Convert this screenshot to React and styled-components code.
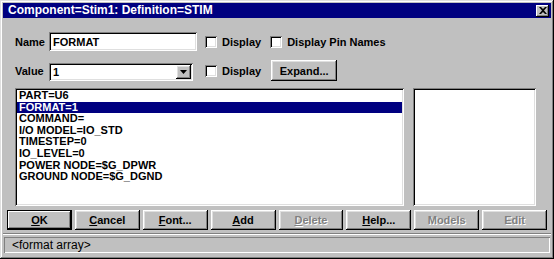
import React from "react"
import styled, { createGlobalStyle } from "styled-components"

const GlobalStyle = createGlobalStyle`
  html, body {
    margin: 0;
    padding: 0;
    background: #c0c0c0;
  }
  * {
    box-sizing: border-box;
  }
`

const raised = `
  box-shadow: inset -1px -1px #000, inset 1px 1px #fff, inset -2px -2px #808080, inset 2px 2px #dfdfdf;
`

const sunken = `
  box-shadow: inset 1px 1px #808080, inset -1px -1px #fff, inset 2px 2px #000, inset -2px -2px #dfdfdf;
`

const Window = styled.div`
  width: 554px;
  height: 259px;
  background: #c0c0c0;
  padding: 3px;
  display: flex;
  flex-direction: column;
  font-family: "Liberation Sans", Arial, sans-serif;
  font-size: 11px;
  font-weight: bold;
  color: #000;
  box-shadow: inset -1px -1px #000, inset 1px 1px #dfdfdf, inset -2px -2px #808080, inset 2px 2px #fff;
`

const TitleBar = styled.div`
  height: 15px;
  background: #000080;
  color: #fff;
  display: flex;
  align-items: center;
  justify-content: space-between;
  padding: 0 2px 0 5px;
  font-size: 12px;
  line-height: 15px;
`

const CloseButton = styled.div`
  width: 13px;
  height: 12px;
  background: #c0c0c0;
  display: flex;
  align-items: center;
  justify-content: center;
  box-shadow: inset -1px -1px #000, inset 1px 1px #fff, inset -2px -2px #808080;
`

const Body = styled.div`
  flex: 1;
  display: flex;
  flex-direction: column;
  padding: 14px 12px 0 12px;
`

const Row = styled.div`
  display: flex;
  align-items: center;
  height: ${({ $h }) => $h}px;
  margin-top: ${({ $mt }) => $mt || 0}px;
`

const Label = styled.div`
  width: 34px;
  flex-shrink: 0;
`

const TextBox = styled.div`
  width: ${({ $w }) => $w}px;
  height: ${({ $h }) => $h}px;
  align-self: ${({ $self }) => $self || "center"};
  background: #fff;
  ${sunken}
  padding: 0 4px;
  display: flex;
  align-items: center;
  position: relative;
`

const DropButton = styled.div`
  position: absolute;
  right: 2px;
  top: 2px;
  bottom: 2px;
  width: 15px;
  background: #c0c0c0;
  ${raised}
  display: flex;
  align-items: center;
  justify-content: center;
`

const Check = styled.div`
  width: 12px;
  height: 12px;
  background: #fff;
  margin-left: ${({ $ml }) => $ml}px;
  margin-right: 5px;
  flex-shrink: 0;
  box-shadow: inset 1px 1px #808080, inset -1px -1px #fff, inset 2px 2px #000, inset -2px -2px #dfdfdf;
`

const Button = styled.div`
  height: ${({ $h }) => $h || 20}px;
  width: ${({ $w }) => ($w ? `${$w}px` : "auto")};
  flex: ${({ $w }) => ($w ? "none" : 1)};
  margin-left: ${({ $ml }) => $ml || 0}px;
  display: flex;
  align-items: center;
  justify-content: center;
  background: #c0c0c0;
  color: ${({ $disabled }) => ($disabled ? "#808080" : "#000")};
  text-shadow: ${({ $disabled }) => ($disabled ? "1px 1px #fff" : "none")};
  box-shadow: ${({ $default }) =>
    $default
      ? "inset 0 0 0 1px #000, inset -2px -2px #000, inset 2px 2px #fff, inset -3px -3px #808080"
      : "inset -1px -1px #000, inset 1px 1px #fff, inset -2px -2px #808080, inset 2px 2px #dfdfdf"};
`

const Key = styled.span`
  text-decoration: underline;
`

const Lists = styled.div`
  display: flex;
  gap: 9px;
  height: 118px;
  margin-top: 7px;
`

const ListBox = styled.div`
  width: ${({ $w }) => $w}px;
  height: 100%;
  background: #fff;
  padding: 2px;
  box-shadow: inset 1px 1px #808080, inset -1px -1px #fff, inset 2px 2px #000, inset -2px -2px #dfdfdf;
`

const Item = styled.div`
  height: 11.6px;
  line-height: 11.6px;
  padding-left: 2px;
  white-space: nowrap;
  background: ${({ $selected }) => ($selected ? "#000080" : "transparent")};
  color: ${({ $selected }) => ($selected ? "#fff" : "#000")};
`

const Buttons = styled.div`
  display: flex;
  gap: 3px;
  margin: 4px -8px 0 -8px;
`

const Separator = styled.div`
  height: 2px;
  margin: 3px -12px 0 -12px;
  border-top: 1px solid #808080;
  border-bottom: 1px solid #fff;
`

const StatusBar = styled.div`
  height: 16px;
  margin: 2px -11px 0 -11px;
  padding-left: 8px;
  display: flex;
  align-items: center;
  font-size: 12px;
  font-weight: normal;
  box-shadow: inset 1px 1px #808080, inset -1px -1px #fff;
`

const items = [
  "PART=U6",
  "FORMAT=1",
  "COMMAND=",
  "I/O MODEL=IO_STD",
  "TIMESTEP=0",
  "IO_LEVEL=0",
  "POWER NODE=$G_DPWR",
  "GROUND NODE=$G_DGND",
]

export default function App() {
  return (
    <>
      <GlobalStyle />
      <Window>
        <TitleBar>
          <span>Component=Stim1: Definition=STIM</span>
          <CloseButton>
            <svg width="8" height="7" viewBox="0 0 8 7">
              <path d="M0 0h2l2 2 2-2h2L5 3.5 8 7H6L4 5 2 7H0l3-3.5z" fill="#000" />
            </svg>
          </CloseButton>
        </TitleBar>
        <Body>
          <Row $h={19}>
            <Label>Name</Label>
            <TextBox $w={148} $h={19}>FORMAT</TextBox>
            <Check $ml={8} />
            Display
            <Check $ml={9} />
            Display Pin Names
          </Row>
          <Row $h={21} $mt={9}>
            <Label>Value</Label>
            <TextBox $w={144} $h={18} $self="flex-end">
              1
              <DropButton>
                <svg width="7" height="5" viewBox="0 0 7 5">
                  <path d="M0 0h7L3.5 4z" fill="#000" />
                </svg>
              </DropButton>
            </TextBox>
            <Check $ml={12} />
            Display
            <Button $w={66} $h={21} $ml={10}>
              Expand...
            </Button>
          </Row>
          <Lists>
            <ListBox $w={389}>
              {items.map((it, i) => (
                <Item key={it} $selected={i === 1}>
                  {it}
                </Item>
              ))}
            </ListBox>
            <ListBox $w={123} />
          </Lists>
          <Buttons>
            <Button $default>
              <Key>O</Key>K
            </Button>
            <Button>
              <Key>C</Key>ancel
            </Button>
            <Button>
              <Key>F</Key>ont...
            </Button>
            <Button>
              <Key>A</Key>dd
            </Button>
            <Button $disabled>
              <Key>D</Key>elete
            </Button>
            <Button>
              <Key>H</Key>elp...
            </Button>
            <Button $disabled>Models</Button>
            <Button $disabled>Edit</Button>
          </Buttons>
          <Separator />
          <StatusBar>&lt;format array&gt;</StatusBar>
        </Body>
      </Window>
    </>
  )
}
